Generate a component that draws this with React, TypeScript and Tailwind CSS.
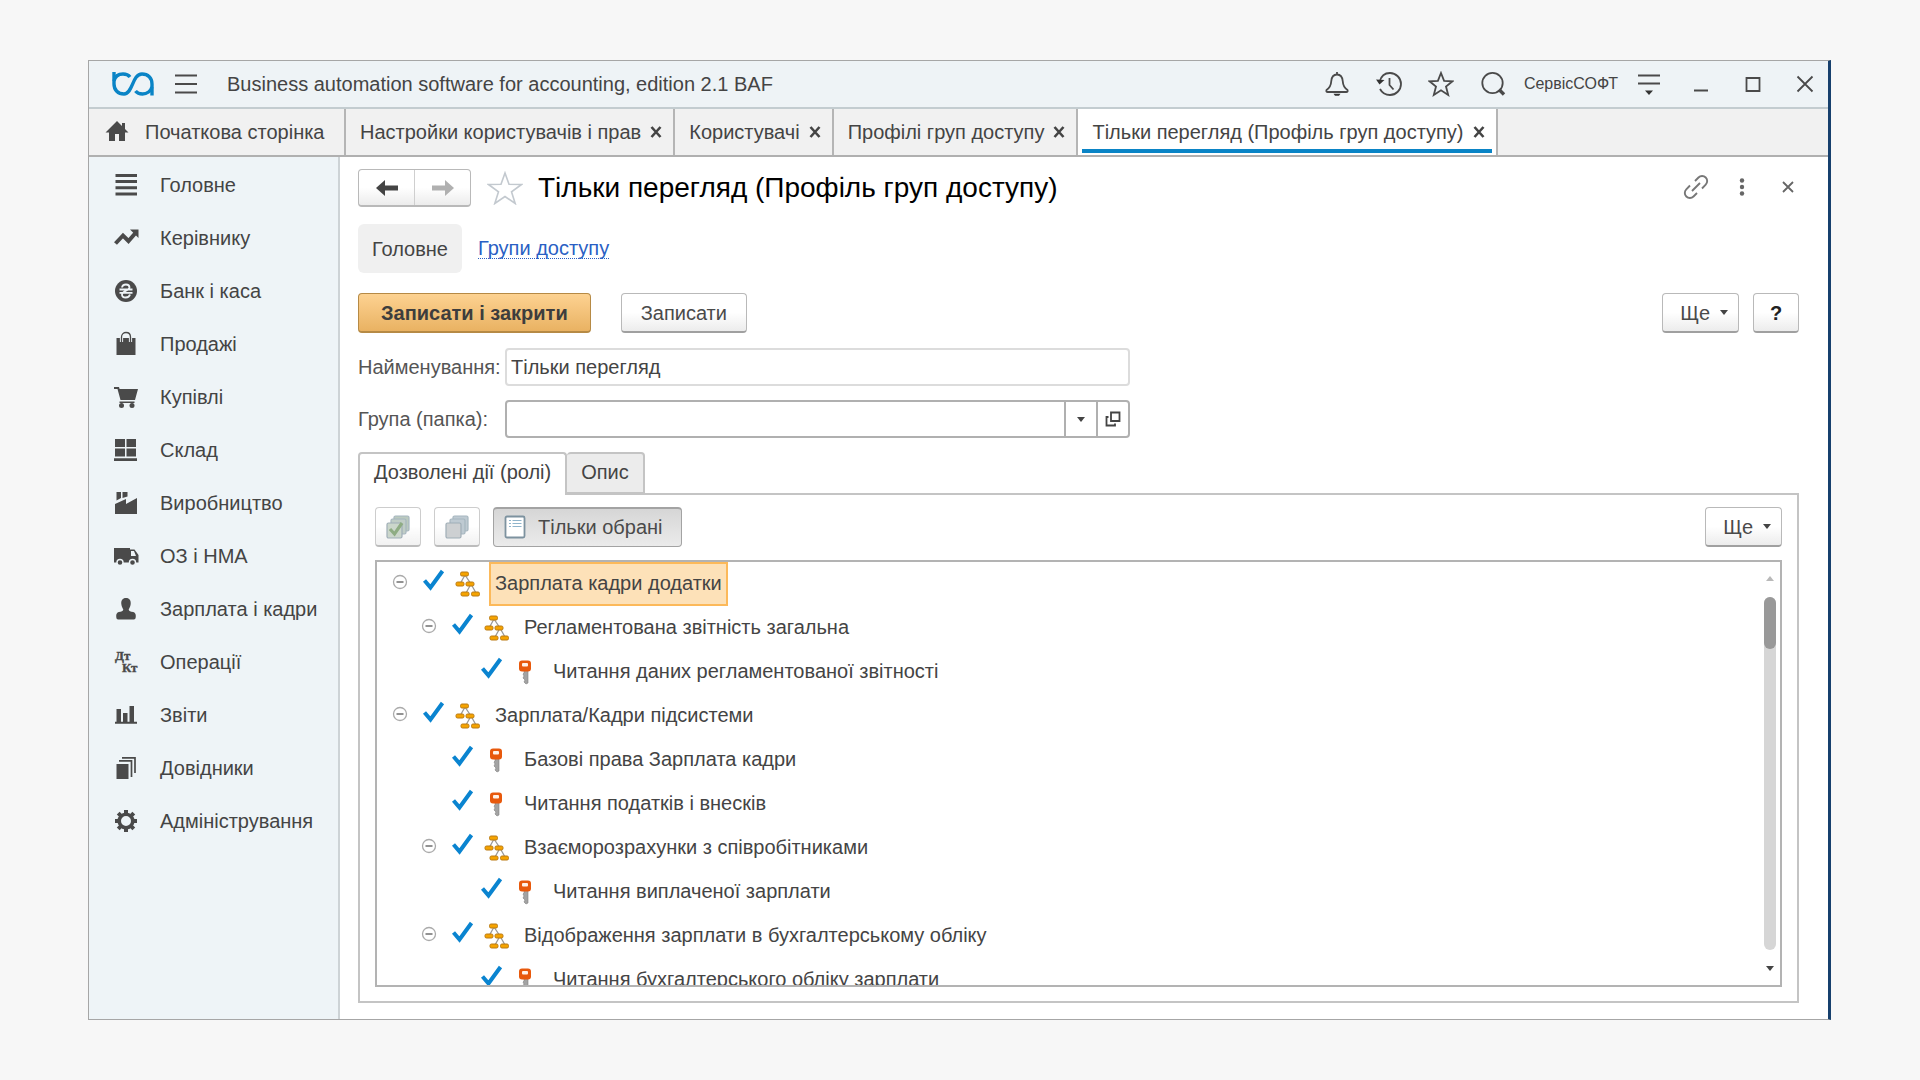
import React, { useState } from 'react'

type TreeItem = {
  label: string
  level: number
  kind: 'group' | 'key'
}

const windowTabs = [
  'Настройки користувачів і прав',
  'Користувачі',
  'Профілі груп доступу',
  'Тільки перегляд (Профіль груп доступу)',
]

const treeItems: TreeItem[] = [
  { label: 'Зарплата кадри додатки', level: 0, kind: 'group' },
  { label: 'Регламентована звітність загальна', level: 1, kind: 'group' },
  { label: 'Читання даних регламентованої звітності', level: 2, kind: 'key' },
  { label: 'Зарплата/Кадри підсистеми', level: 0, kind: 'group' },
  { label: 'Базові права Зарплата кадри', level: 1, kind: 'key' },
  { label: 'Читання податків і внесків', level: 1, kind: 'key' },
  { label: 'Взаєморозрахунки з співробітниками', level: 1, kind: 'group' },
  { label: 'Читання виплаченої зарплати', level: 2, kind: 'key' },
  { label: 'Відображення зарплати в бухгалтерському обліку', level: 1, kind: 'group' },
  { label: 'Читання бухгалтерського обліку зарплати', level: 2, kind: 'key' },
]

const indents = ['pl-[14px]', 'pl-[43px]', 'pl-[72px]']

const solid = { viewBox: '0 0 24 24', className: 'size-6 shrink-0 overflow-visible fill-[#4a4a4a]', 'aria-hidden': true }
const outline = {
  viewBox: '0 0 26 26',
  className: 'size-[26px] fill-none stroke-[#4a4a4a]',
  strokeWidth: 1.8,
  'aria-hidden': true,
}

const sections = [
  { label: 'Головне', icon: <svg {...solid}><path d="M1.500 1h21.500v3H1.500zM1.500 7h21.500v3H1.500zM1.500 13.200h21.500v3H1.500zM1.500 19.400h21.500v3H1.500z" /></svg> },
  {
    label: 'Керівнику',
    icon: (
      <svg {...solid}>
        <path d="M1.500 17.500 9 9.500l5.500 5.500 7-8" fill="none" stroke="#4a4a4a" strokeWidth="4" />
        <path d="M16 3.500h8.500V12z" />
      </svg>
    ),
  },
  {
    label: 'Банк і каса',
    icon: (
      <svg {...solid}>
        <circle cx="12" cy="12" r="11" />
        <path d="M8 8.500C8.500 4.500 15.500 4.500 15.500 8.500c0 3-7.500 3.500-7.500 7 0 4 7 4 8 0M5.500 10.500h13M5.500 13.800h13" fill="none" stroke="#eef4f7" strokeWidth="1.800" />
      </svg>
    ),
  },
  {
    label: 'Продажі',
    icon: (
      <svg {...solid}>
        <path d="M2.500 6h19v17h-19z" />
        <path d="M7.500 10V5c0-6 9-6 9 0v5" fill="none" stroke="#eef4f7" strokeWidth="3.200" />
        <path d="M7.500 10V5c0-6 9-6 9 0v5" fill="none" stroke="#4a4a4a" strokeWidth="1.300" />
      </svg>
    ),
  },
  {
    label: 'Купівлі',
    icon: (
      <svg {...solid}>
        <path d="M0 2h5l.6 2H24l-3 11H6.500L3.500 4H0zM5.500 16.500h15V18h-15z" />
        <circle cx="7.500" cy="20.500" r="2.500" />
        <circle cx="18" cy="20.500" r="2.500" />
      </svg>
    ),
  },
  { label: 'Склад', icon: <svg {...solid}><path d="M1 1h10v8H1zM12.500 1h9.500v8h-9.500zM1 10.500h10v8H1zM12.500 10.500h9.500v8h-9.500zM0 20.200h23V23H0z" /></svg> },
  { label: 'Виробництво', icon: <svg {...solid}><path d="M2.500 1h4.500v6L2.500 9.500zM8.500 1h5v4.500L8.500 7zM1 13l11-5v5l11-6v16H1z" /></svg> },
  {
    label: 'ОЗ і НМА',
    icon: (
      <svg {...solid}>
        <path fillRule="evenodd" d="M0 4h16v1.500h4.500L24.500 11v7.500H0zm17 3v5h5l-2-5z" />
        <circle cx="6" cy="18.500" r="3" stroke="#eef4f7" strokeWidth="1.400" />
        <circle cx="18.500" cy="18.500" r="3" stroke="#eef4f7" strokeWidth="1.400" />
      </svg>
    ),
  },
  {
    label: 'Зарплата і кадри',
    icon: <svg {...solid}><path d="M12 1c3.500 0 5 2.500 4.700 6-.3 3-1.700 4.500-2 5.500 0 1.500 2 2 4.500 2.600 1.800.5 2.600 1.900 2.600 3.900 0 2.500-.6 3.500-2 3.500H4.200c-1.400 0-2-1-2-3.500 0-2 .8-3.400 2.600-3.900 2.500-.6 4.500-1.100 4.500-2.600-.3-1-1.700-2.500-2-5.500C7 3.500 8.500 1 12 1z" /></svg>,
  },
  {
    label: 'Операції',
    icon: (
      <svg {...solid} fontFamily="Liberation Serif, serif" fontWeight="700" fontSize="13" stroke="#4a4a4a" strokeWidth=".4">
        <text x="1" y="10">Дт</text>
        <text x="8" y="22">Кт</text>
      </svg>
    ),
  },
  { label: 'Звіти', icon: <svg {...solid}><path d="M2.500 6h4.500v13H2.500zM9 10h4.500v9H9zM15.500 3h4.500v16h-4.500zM1 18.800h22v2H1z" /></svg> },
  {
    label: 'Довідники',
    icon: (
      <svg {...solid}>
        <path d="M2.500 8h12v15h-12z" />
        <path d="M5 4.800h12.500V21M8 1.800h13V17" fill="none" stroke="#4a4a4a" strokeWidth="1.700" />
      </svg>
    ),
  },
  {
    label: 'Адміністрування',
    icon: (
      <svg {...solid}>
        <circle cx="12" cy="12" r="6.800" fill="none" stroke="#4a4a4a" strokeWidth="3.600" />
        <path d="M12 1v4M12 19v4M1 12h4M19 12h4M4.200 4.200l3 3M16.800 16.800l3 3M4.200 19.800l3-3M16.800 7.200l3-3" stroke="#4a4a4a" strokeWidth="4" />
      </svg>
    ),
  },
]

const headerActions = [
  {
    label: 'Сповіщення',
    icon: (
      <svg {...outline}>
        <path d="M13 1v2.500M13 3.500c-4 0-5.500 3-5.800 7-.2 4-1.700 6.500-4.700 8.500-.5 1.300 0 2 1.200 2h18.600c1.200 0 1.700-.7 1.200-2-3-2-4.500-4.500-4.700-8.500-.3-4-1.800-7-5.800-7z" />
        <path d="M9.500 22.800h7l-1.500 2h-4z" fill="#333" stroke="none" />
      </svg>
    ),
  },
  {
    label: 'Історія',
    icon: (
      <svg {...outline}>
        <path d="M3.500 11C5 5 9 2 14 2c6 0 11 5 11 11s-5 11-11 11c-4.500 0-8-2.300-10-6" />
        <path d="M13.500 7v7l4 4.500" />
        <path d="M0 8.500l8.500.5-5 4.500z" fill="#333" stroke="none" />
      </svg>
    ),
  },
  { label: 'Обране', icon: <svg {...outline}><path d="m13 2 3.100 7.800 8.400.5-6.500 5.300 2.200 8.300-7.200-4.600-7.200 4.600L8 15.600 1.500 10.300l8.400-.5z" /></svg> },
  {
    label: 'Пошук',
    icon: (
      <svg {...outline}>
        <circle cx="12.500" cy="12" r="10.200" />
        <path d="m19 18.500 5 5" strokeWidth="3.400" />
      </svg>
    ),
  },
]

function GroupIcon() {
  return (
    <svg viewBox="0 0 26 26" className="size-[26px] shrink-0" aria-hidden="true">
      <path d="M10 4 5 13M10 4l6 9 5 9M16 13l-5 9" fill="none" stroke="#999" strokeWidth="1.300" />
      <g fill="#f5a300" stroke="#b97a14">
        <rect x="5.500" y="1" width="8" height="4" rx="1.500" />
        <rect x="1" y="11" width="8" height="4" rx="1.500" />
        <rect x="11" y="11" width="8" height="4" rx="1.500" />
        <rect x="6" y="21" width="8" height="4" rx="1.500" />
        <rect x="16.500" y="21" width="8" height="4" rx="1.500" />
      </g>
    </svg>
  )
}

function KeyIcon() {
  return (
    <svg viewBox="0 0 26 26" className="size-[26px] shrink-0" aria-hidden="true">
      <path d="M11 11h4v13l-2 1-2-2 1-2-2-2 1-2-1-2 1-1z" fill="#a3a3a3" stroke="#808080" strokeWidth=".6" />
      <rect x="6" y="1.500" width="12" height="11" rx="3" fill="#e8590c" />
      <rect x="9" y="4" width="6" height="3.500" rx="1" fill="#fff1e6" />
    </svg>
  )
}

function Caret({ className }: { className: string }) {
  return <svg viewBox="0 0 8 5" className={`h-[5px] w-2 ${className}`} aria-hidden="true"><path d="M0 0h8L4 5z" /></svg>
}

function MoreButton() {
  return (
    <button className={`${buttonStyle} flex w-[77px] items-center justify-end gap-[10px] pr-[10px]`}>
      Ще
      <Caret className="fill-[#444]" />
    </button>
  )
}

const buttonStyle =
  'h-10 rounded border border-[#b9b9b9] border-b-2 border-b-[#a0a0a0] bg-linear-to-b from-white from-50% to-[#ececec] text-[#4a4a4a]'

function TitleBar() {
  return (
    <header className="flex h-12 shrink-0 items-center border-b-2 border-[#c3ccd0] bg-[#eef3f6] pl-[23px] pr-[10px]">
      <svg viewBox="0 0 42 24" className="h-6 w-[42px] fill-none stroke-[#0a84c6]" strokeWidth="3.400" role="img" aria-label="BAF">
        <path d="M2 0v12c0 6 4 10 10 10C21 22 20 2 30 2c6 0 10 4 10 10v11.500" />
        <path d="M2 9c1-4.500 4.500-7 9-7 3 0 5.500 1 7 3M23.500 19c1.500 2 4 3 7 3 4.500 0 8.500-3 9.500-7" />
      </svg>
      <button aria-label="Меню" className="ml-[21px]">
        <svg viewBox="0 0 22 20" className="h-5 w-[22px] stroke-[#4a4a4a]" strokeWidth="1.800"><path d="M0 1.500h22M0 10h22M0 18.500h22" /></svg>
      </button>
      <h1 className="ml-[30px] grow text-[#444]">Business automation software for accounting, edition 2.1 BAF</h1>
      <div className="flex items-center gap-[26px]">
        {headerActions.map((action) => (
          <button key={action.label} aria-label={action.label}>{action.icon}</button>
        ))}
        <button className="-ml-2 text-base text-[#444]">СервісСОФТ</button>
        <button aria-label="Налаштування" className="-ml-2">
          <svg {...outline}>
            <path d="M2 4.500h22M2 12.500h22" />
            <path d="M9 19.500h8l-4 4.500z" fill="#333" stroke="none" />
          </svg>
        </button>
        <button aria-label="Згорнути"><svg {...outline}><path d="M6 19.500h14" strokeWidth="2" /></svg></button>
        <button aria-label="Розгорнути"><svg {...outline}><path d="M6.500 7h13v13h-13z" /></svg></button>
        <button aria-label="Закрити"><svg {...outline}><path d="m5.500 5.500 15 15m0-15-15 15" /></svg></button>
      </div>
    </header>
  )
}

function TabBar() {
  return (
    <nav className="flex h-12 shrink-0 border-b-2 border-[#b0b0b0] bg-[#f1f1f1] text-[#444]">
      <a href="#home" className="flex w-[257px] items-center gap-4 border-r-2 border-[#b5b5b5] pl-4">
        <svg viewBox="0 0 24 24" className="size-6 fill-[#4a4a4a]" aria-hidden="true">
          <path d="M12 1 .5 12.500H4V21h6v-7h4v7h6v-8.500h3.500L20 9V3h-3v3z" />
        </svg>
        Початкова сторінка
      </a>
      {windowTabs.map((tab, i) => {
        const active = i === windowTabs.length - 1
        return (
          <div key={tab} className={`flex border-r-2 border-[#b5b5b5] px-1 ${active ? 'bg-white' : ''}`}>
            <div className={`mb-[2px] flex items-center gap-2 border-b-4 pl-[10px] pr-[6px] pt-[5px] ${active ? 'border-[#0a84c6]' : 'border-transparent'}`}>
              <a href="#tab">{tab}</a>
              <button aria-label={`Закрити ${tab}`}>
                <svg viewBox="0 0 14 14" className="size-[14px] stroke-[#444]" strokeWidth="2.600"><path d="m2.500 2 9 10M11.500 2l-9 10" /></svg>
              </button>
            </div>
          </div>
        )
      })}
    </nav>
  )
}

function Sidebar() {
  return (
    <aside className="w-[251px] shrink-0 border-r-2 border-[#cdd3d6] bg-[#eef4f7] pt-px">
      <ul>
        {sections.map((section) => (
          <li key={section.label}>
            <a href="#section" className="flex h-[53px] items-center gap-[22px] pl-[25px] text-[#444]">
              {section.icon}
              {section.label}
            </a>
          </li>
        ))}
      </ul>
    </aside>
  )
}

function TreeRow({ item, selected, onSelect }: { item: TreeItem; selected: boolean; onSelect: () => void }) {
  return (
    <li className={`flex h-11 items-center ${indents[item.level]}`}>
      {item.kind === 'group' ? (
        <button aria-label="Згорнути групу" className="mr-3 pb-1">
          <svg viewBox="0 0 18 18" className="size-[18px] fill-none stroke-[#aaa]" strokeWidth="1.300">
            <circle cx="9" cy="9" r="6.500" />
            <path d="M5.500 9h7" stroke="#777" strokeWidth="1.600" />
          </svg>
        </button>
      ) : (
        <span className="mr-3 w-[18px]" />
      )}
      <span className="mb-2 grid size-6 shrink-0">
        <input type="checkbox" defaultChecked aria-label={item.label} className="peer col-start-1 row-start-1 appearance-none" />
        <svg viewBox="0 0 24 24" className="pointer-events-none invisible col-start-1 row-start-1 fill-none stroke-[#0a84d0] peer-checked:visible" strokeWidth="4">
          <path d="m3.500 12.500 6 7L21.500 3" />
        </svg>
      </span>
      <span className="ml-[10px] mr-2 flex">{item.kind === 'group' ? <GroupIcon /> : <KeyIcon />}</span>
      <button
        onClick={onSelect}
        className={`h-11 whitespace-nowrap border-2 px-1 pb-[2px] ${selected ? 'border-[#fcb95a] bg-[#fde1b8]' : 'border-transparent'}`}
      >
        {item.label}
      </button>
    </li>
  )
}

function RolesPanel() {
  const [selected, setSelected] = useState(0)

  return (
    <section className="-mt-px flex min-h-0 grow flex-col border-2 border-[#c4c4c4] px-[15px] pb-[14px] pt-3">
      <div className="flex items-center">
        <button aria-label="Позначити все" className={`${buttonStyle} flex w-[46px] items-center justify-center opacity-70`}>
          <svg viewBox="0 0 26 26" className="size-[26px]" strokeWidth="1.200">
            <rect x="9" y="2" width="15" height="15" rx="1.500" fill="#9fb5a5" stroke="#8298a5" />
            <rect x="6" y="5" width="15" height="15" rx="1.500" fill="#a6b9ae" stroke="#8298a5" />
            <rect x="2" y="9" width="15" height="15" rx="1.500" fill="#b6c6b6" stroke="#788c99" />
            <path d="m5 15 4.500 5L17 9" fill="none" stroke="#5f8a4f" strokeWidth="3.200" />
          </svg>
        </button>
        <button aria-label="Зняти позначки" className={`${buttonStyle} ml-[13px] flex w-[46px] items-center justify-center opacity-70`}>
          <svg viewBox="0 0 26 26" className="size-[26px]" strokeWidth="1.200">
            <rect x="9" y="2" width="15" height="15" rx="1.500" fill="#a3b5c0" stroke="#8298a5" />
            <rect x="6" y="5" width="15" height="15" rx="1.500" fill="#a3b5c0" stroke="#8298a5" />
            <rect x="2" y="9" width="15" height="15" rx="1.500" fill="#b9bdbf" stroke="#788c99" />
          </svg>
        </button>
        <button aria-pressed="true" className="ml-[13px] flex h-10 items-center gap-3 rounded border border-t-2 border-[#a3a3a3] bg-linear-to-b from-[#d6d6d6] to-[#ebebeb] pb-[2px] pl-[10px] pr-[18px] text-[#4a4a4a]">
          <svg viewBox="0 0 22 24" className="h-6 w-[22px]" aria-hidden="true">
            <rect x="1.500" y="1.500" width="19" height="21" rx="1.500" fill="#fff" stroke="#7d929f" strokeWidth="1.800" />
            <path d="M5 5.500h2M5 8.500h2M5 11.500h2M8.500 5.500h9M8.500 8.500h9M8.500 11.500h9" stroke="#8fb4cb" strokeWidth="1.200" />
          </svg>
          Тільки обрані
        </button>
        <div className="ml-auto"><MoreButton /></div>
      </div>

      <div className="mt-[13px] flex min-h-0 grow border-2 border-[#b3b3b3]">
        <ul className="h-full grow overflow-hidden text-[#444]">
          {treeItems.map((item, i) => (
            <TreeRow key={item.label} item={item} selected={i === selected} onSelect={() => setSelected(i)} />
          ))}
        </ul>
        <div className="flex w-5 shrink-0 flex-col items-center py-[14px]">
          <Caret className="rotate-180 fill-[#b9b9b9]" />
          <div className="my-4 w-3 grow rounded-full bg-[#d6d6d6]">
            <div className="h-[52px] rounded-full bg-[#999]" />
          </div>
          <Caret className="fill-[#444]" />
        </div>
      </div>
    </section>
  )
}

export default function App() {
  return (
    <div className="flex h-screen flex-col bg-[#f7f7f7] pb-[60px] pl-[88px] pr-[89px] pt-[60px] font-['Liberation_Sans',Arial,sans-serif] text-[20px] leading-6">
      <div className="flex min-h-0 grow flex-col border border-r-3 border-[#a6a6a6] border-r-[#17406d] bg-white">
        <TitleBar />
        <TabBar />
        <div className="flex min-h-0 grow">
          <Sidebar />
          <main className="flex min-w-0 grow flex-col pb-4 pl-[18px] pr-[29px] pt-3">
            <div className="flex h-[38px] items-center">
              <div className="flex h-[38px] w-[113px] rounded border border-b-2 border-[#b9b9b9] bg-linear-to-b from-white from-50% to-[#ececec]">
                <button aria-label="Назад" className="flex grow items-center justify-center border-r border-[#cfcfcf]">
                  <svg viewBox="0 0 22 18" className="h-[18px] w-[22px] fill-[#444]"><path d="M0 9 9 1v5.500h13v5H9V17z" /></svg>
                </button>
                <button aria-label="Вперед" className="flex grow items-center justify-center">
                  <svg viewBox="0 0 22 18" className="h-[18px] w-[22px] fill-[#b0b0b0]"><path d="m22 9-9-8v5.500H0v5h13V17z" /></svg>
                </button>
              </div>
              <button aria-label="Додати в обране" className="ml-4">
                <svg viewBox="0 0 36 34" className="h-[34px] w-9 fill-none stroke-[#c3c9cf]" strokeWidth="1.600">
                  <path d="m18 2 4 11.300 12.500.2-10 7.300 3.700 11.700L18 25.500 7.800 32.500l3.700-11.700-10-7.300 12.500-.2z" />
                </svg>
              </button>
              <h2 className="ml-[15px] grow text-[28px] text-black">Тільки перегляд (Профіль груп доступу)</h2>
              <div className="-mr-[2px] flex items-center pb-[2px]">
                <button aria-label="Посилання">
                  <svg viewBox="0 0 26 26" className="size-[26px] fill-none stroke-[#777]" strokeWidth="1.900">
                    <path d="m12 7 3.500-3.500a5 5 0 0 1 7.200 7.200L19 14.500M14 19l-3.500 3.500a5 5 0 0 1-7.200-7.200L7 11.500M9 17l8-8" />
                  </svg>
                </button>
                <button aria-label="Додатково" className="ml-5">
                  <svg viewBox="0 0 26 26" className="size-[26px] fill-[#666]"><circle cx="13" cy="6.500" r="2.200" /><circle cx="13" cy="13" r="2.200" /><circle cx="13" cy="19.500" r="2.200" /></svg>
                </button>
                <button aria-label="Закрити форму" className="ml-5">
                  <svg viewBox="0 0 26 26" className="size-[26px] stroke-[#666]" strokeWidth="1.800"><path d="m8 8 10 10m0-10L8 18" /></svg>
                </button>
              </div>
            </div>

            <nav className="mt-[17px] flex h-[51px] items-center gap-4 text-[#444]">
              <a href="#main" className="flex h-full items-center rounded-md bg-[#f0f0f0] px-[14px]">Головне</a>
              <a href="#groups" className="border-b border-dotted border-[#2a5fc4] leading-5 text-[#2a5fc4]">Групи доступу</a>
            </nav>

            <div className="mt-5 flex">
              <button className="h-10 rounded border border-b-2 border-[#b68a45] bg-linear-to-b from-[#fdd291] to-[#e9b262] px-[22px] font-bold text-[#3d3d3d]">
                Записати і закрити
              </button>
              <button className={`${buttonStyle} ml-[30px] px-[19px]`}>Записати</button>
              <div className="ml-auto flex gap-[14px]">
                <MoreButton />
                <button className={`${buttonStyle} w-[46px] font-bold text-[#222]`}>?</button>
              </div>
            </div>

            <form className="mt-[15px] grid w-[772px] grid-cols-[147px_1fr] items-center gap-y-[14px] text-[#555]">
              <label htmlFor="name">Найменування:</label>
              <input id="name" defaultValue="Тільки перегляд" className="h-[38px] rounded border-2 border-[#dcdcdc] px-1 text-[#444]" />
              <label htmlFor="folder">Група (папка):</label>
              <div className="flex h-[38px] rounded border-2 border-[#b0b0b0]">
                <input id="folder" className="min-w-0 grow px-1 text-[#444]" />
                <button type="button" aria-label="Вибрати зі списку" className="flex w-8 items-center justify-center border-l-2 border-[#b0b0b0]">
                  <Caret className="fill-[#444]" />
                </button>
                <button type="button" aria-label="Відкрити" className="flex w-8 items-center justify-center border-l-2 border-[#b0b0b0]">
                  <svg viewBox="0 0 16 16" className="size-4 fill-none stroke-[#444]" strokeWidth="1.800"><path d="M6 1.500h8.500V10H6zM3.500 6H1.500v8.500H10v-2" /></svg>
                </button>
              </div>
            </form>

            <div role="tablist" className="z-10 mt-[14px] flex h-[42px] text-[#444]">
              <button role="tab" aria-selected="true" className="h-[43px] rounded-t border-2 border-b-0 border-[#c4c4c4] bg-white px-[14px] pb-[5px]">Дозволені дії (ролі)</button>
              <button role="tab" aria-selected="false" className="rounded-t border-2 border-l-0 border-[#c4c4c4] bg-[#ececec] px-[14px] pb-[2px]">Опис</button>
            </div>
            <RolesPanel />
          </main>
        </div>
      </div>
    </div>
  )
}
